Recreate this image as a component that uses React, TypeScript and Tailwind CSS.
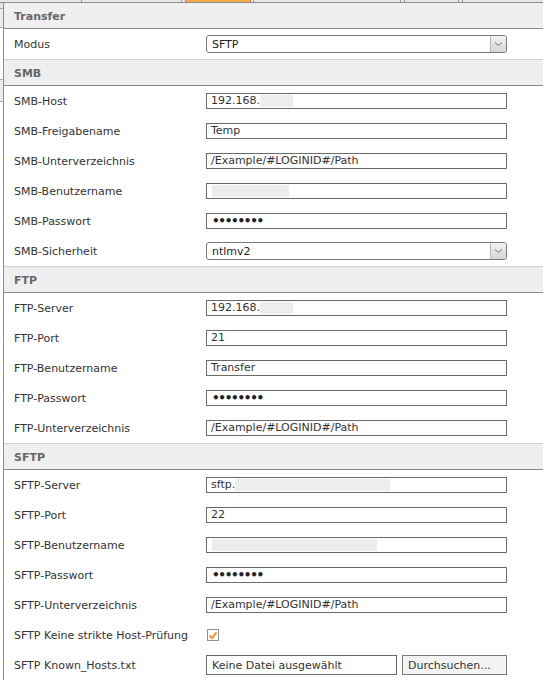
import React from "react"

type Field =
  | { kind: "text"; label: string; value?: string; blur?: number; blurOnly?: boolean }
  | { kind: "password"; label: string }
  | { kind: "select"; label: string; value: string }
  | { kind: "checkbox"; label: string }
  | { kind: "file"; label: string }

const sections: { title: string; fields: Field[] }[] = [
  {
    title: "Transfer",
    fields: [{ kind: "select", label: "Modus", value: "SFTP" }],
  },
  {
    title: "SMB",
    fields: [
      { kind: "text", label: "SMB-Host", value: "192.168.", blur: 33 },
      { kind: "text", label: "SMB-Freigabename", value: "Temp" },
      { kind: "text", label: "SMB-Unterverzeichnis", value: "/Example/#LOGINID#/Path" },
      { kind: "text", label: "SMB-Benutzername", blur: 77, blurOnly: true },
      { kind: "password", label: "SMB-Passwort" },
      { kind: "select", label: "SMB-Sicherheit", value: "ntlmv2" },
    ],
  },
  {
    title: "FTP",
    fields: [
      { kind: "text", label: "FTP-Server", value: "192.168.", blur: 33 },
      { kind: "text", label: "FTP-Port", value: "21" },
      { kind: "text", label: "FTP-Benutzername", value: "Transfer" },
      { kind: "password", label: "FTP-Passwort" },
      { kind: "text", label: "FTP-Unterverzeichnis", value: "/Example/#LOGINID#/Path" },
    ],
  },
  {
    title: "SFTP",
    fields: [
      { kind: "text", label: "SFTP-Server", value: "sftp.", blur: 155 },
      { kind: "text", label: "SFTP-Port", value: "22" },
      { kind: "text", label: "SFTP-Benutzername", blur: 165, blurOnly: true },
      { kind: "password", label: "SFTP-Passwort" },
      { kind: "text", label: "SFTP-Unterverzeichnis", value: "/Example/#LOGINID#/Path" },
      { kind: "checkbox", label: "SFTP Keine strikte Host-Prüfung" },
      { kind: "file", label: "SFTP Known_Hosts.txt" },
    ],
  },
]

function Control({ field }: { field: Field }) {
  if (field.kind === "select") {
    return (
      <div className="flex h-[18px] w-[301px] items-stretch rounded-[3px] border border-[#7a7a7a] bg-white">
        <span className="flex-1 pl-[5px] pt-px leading-[16px] text-[#222]">{field.value}</span>
        <span className="flex w-[16px] items-center justify-center rounded-r-[2px] border-l border-[#b5b5b5] bg-gradient-to-b from-[#f2f2f2] to-[#d6d6d6]">
          <svg width="9" height="6" viewBox="0 0 9 6">
            <path d="M1 1.5 L4.5 4.5 L8 1.5" fill="none" stroke="#6a6a6a" strokeWidth="1" />
          </svg>
        </span>
      </div>
    )
  }
  if (field.kind === "checkbox") {
    return (
      <div className="ml-[1px] flex h-[12px] w-[12px] items-center justify-center border border-[#8f8f8f] bg-white">
        <svg width="10" height="9" viewBox="0 0 10 9">
          <path d="M1.5 4.5 L4 7 L8.5 1.5" fill="none" stroke="#ec9a42" strokeWidth="2.2" />
        </svg>
      </div>
    )
  }
  if (field.kind === "file") {
    return (
      <div className="flex h-[20px] w-[301px] gap-[5px]">
        <div className="flex-1 border border-[#6b6b6b] pl-[5px] pt-px leading-[17px] text-[#333]">
          Keine Datei ausgewählt
        </div>
        <div className="w-[105px] border border-[#7a7a7a] bg-[#f3f3f3] pl-[5px] pt-px leading-[17px] text-[#333]">
          Durchsuchen...
        </div>
      </div>
    )
  }
  return (
    <div className="flex h-[16px] w-[301px] items-center border border-[#6b6b6b] bg-white pl-[4px] text-[#333]">
      {field.kind === "password" ? (
        <span className="pl-px text-[12px] font-bold leading-[14px] tracking-[-1.3px] text-[#222]">••••••••</span>
      ) : (
        <>
          {field.value && <span className="leading-[14px]">{field.value}</span>}
          {field.blur && (
            <span
              className={`h-[12px] bg-[#ededed] ${field.blurOnly ? "ml-[1px]" : ""}`}
              style={{ width: field.blur }}
            />
          )}
        </>
      )}
    </div>
  )
}

export default function App() {
  return (
    <div className="relative h-[690px] w-[543px] overflow-hidden bg-white font-['DejaVu_Sans',sans-serif] text-[11px] text-[#333]">
      {/* tab strip cut off at the top */}
      <div className="flex h-[3px] border-b border-[#8c8c8c] bg-[#e8e8e8]">
        <div className="w-[82px] border-r border-[#9a9a9a]" />
        <div className="w-[100px] border-r border-[#9a9a9a]" />
        <div className="ml-[3px] w-[66px] border-x border-[#c98020] bg-[#f8a948]" />
        <div className="ml-[2px] w-[148px] border-x border-[#9a9a9a]" />
        <div className="ml-[3px] w-[55px] border-x border-[#9a9a9a]" />
        <div className="ml-[3px] flex-1 border-l border-[#9a9a9a]" />
      </div>

      <div className="flex">
        {/* cut-off sidebar edge */}
        <div className="flex w-[4px] flex-col border-r border-[#8c8c8c]">
          <div className="h-[6px] border-b border-[#aaa] bg-[#e4e4e4]" />
          <div className="h-[19px] border-b border-[#aaa] bg-[#ececec]" />
          <div className="h-[52px] border-b border-[#aaa] bg-white" />
          <div className="h-[22px] border-b border-[#aaa] bg-[#ececec]" />
          <div className="flex-1 bg-white" />
        </div>

        <div className="flex-1">
          {sections.map((section, si) => (
            <div key={section.title}>
              <div
                className={`flex h-[26px] items-center border-b border-[#8a8a8a] bg-[#efefef] pl-[10px] pt-[4px] font-bold text-[#666] ${
                  si === 0 ? "" : "h-[27px] border-t border-t-[#cfcfcf]"
                }`}
              >
                {section.title}
              </div>
              {section.fields.map((f) => (
                <div key={f.label} className="flex h-[30px] items-center">
                  <div className="w-[202px] pl-[10px] pt-[2px]">{f.label}</div>
                  <Control field={f} />
                </div>
              ))}
            </div>
          ))}
        </div>
      </div>
    </div>
  )
}
